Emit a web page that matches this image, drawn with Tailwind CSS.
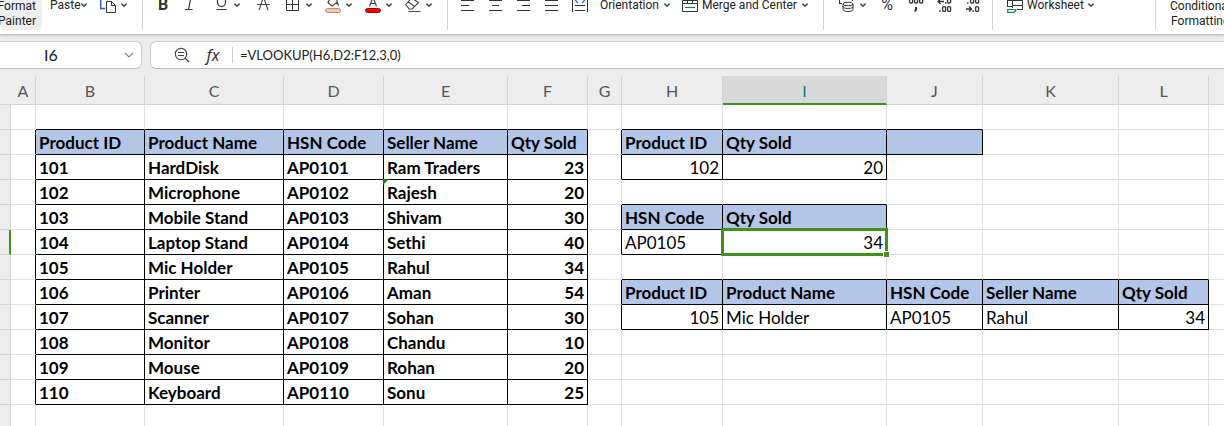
<!DOCTYPE html>
<html lang="en">
<head>
<meta charset="utf-8">
<meta name="viewport" content="width=device-width, initial-scale=1">
<title>Spreadsheet</title>
<script src="https://cdn.jsdelivr.net/npm/@tailwindcss/browser@4"></script>
</head>
<body class="bg-[#ededed] font-['Lato','Liberation_Sans',sans-serif] overflow-hidden h-screen flex flex-col">
<svg class="hidden" aria-hidden="true">
  <symbol id="chev" viewBox="0 0 6 6"><path d="M.3 1.6 3 4.2 5.7 1.6" fill="none" stroke="#444" stroke-width="1.5"/></symbol>
</svg>

<header class="flex shrink-0 h-[35px] overflow-hidden bg-white border-b border-[#c6c6c6] shadow-sm font-['Roboto',sans-serif] text-xs leading-4 text-[#222] whitespace-nowrap relative">
  <div class="flex items-start shrink-0 w-[143px] h-[30px] border-r border-[#d5d5d5]">
    <button class="w-[42px] h-[38px] -mt-2 pt-[7px] pr-1.5 bg-[#eee] rounded-md leading-[15px] flex flex-col items-end shrink-0"><span>Format</span><span>Painter</span></button>
    <button class="flex items-center justify-between w-[37px] ml-2 -mt-[3px] h-4 shrink-0"><span>Paste</span><svg class="size-1.5 shrink-0"><use href="#chev"/></svg></button>
    <button aria-label="Copy" class="flex items-center gap-[5px] ml-[13px] -mt-[3px] h-4 shrink-0"><svg class="size-4" viewBox="0 -3 16 16" fill="none"><path d="M.7-3V8.5H5" stroke="#2456d6" stroke-width="1.4"/><path d="M6.5 1.5h5l4 4v7h-9zM11.5 1.5v4h4" stroke="#333"/></svg><svg class="size-1.5"><use href="#chev"/></svg></button>
  </div>

  <div class="flex items-start shrink-0 w-[305px] h-[30px] border-r border-[#d5d5d5] pl-3">
    <div class="flex items-center gap-[13px] -mt-[3px] h-4">
      <button class="w-4 text-base leading-4 font-bold text-[#333]">B</button>
      <button aria-label="Italic" class="w-4"><svg class="size-4" viewBox="0 -3 16 16"><path d="M7-3 4.5 9.5M1 9.5h7.500" stroke="#333" stroke-width="1.200" fill="none"/></svg></button>
      <button aria-label="Underline" class="flex items-center gap-[5px]"><svg class="size-4" viewBox="0 -3 16 16"><path d="M4.500-3V2.500a4 4 0 0 0 8 0V-3M3.500 9.500h10" stroke="#333" stroke-width="1.200" fill="none"/></svg><svg class="size-1.5"><use href="#chev"/></svg></button>
      <button aria-label="Strikethrough" class="w-[19px] flex justify-center"><svg class="size-4" viewBox="0 -3 16 16"><path d="M2 4.500h13M8.500-3 4 10M8.500-3 13 10" stroke="#444" stroke-width="1.100" fill="none"/></svg></button>
      <button aria-label="Borders" class="flex items-center gap-[5px]"><svg class="size-4" viewBox="0 -3 16 16"><path d="M1.500-3V10.500h12V-3M7.500-3V10.500M1.500 4.500h12" stroke="#333" fill="none"/></svg><svg class="size-1.5"><use href="#chev"/></svg></button>
      <button aria-label="Fill colour" class="flex items-center gap-[5px]"><svg class="size-4" viewBox="0 -3 16 16"><path d="M6-3 3 2.500 7 6l5-3.500V-3M12 1.500l1.500 4" stroke="#444" stroke-width="1.200" fill="none"/><rect x=".5" y="8.500" width="15" height="4" rx="2" fill="#f5c6aa" stroke="#b9917b"/></svg><svg class="size-1.5"><use href="#chev"/></svg></button>
      <button aria-label="Font colour" class="flex items-center gap-[5px]"><svg class="size-4" viewBox="0 -3 16 16"><path d="M4.500 6.500 8-3l3.500 9.500M5.500 3.500h5" stroke="#444" stroke-width="1.200" fill="none"/><rect x=".5" y="8.500" width="15" height="4" rx="2" fill="#f00000" stroke="#b40000"/></svg><svg class="size-1.5"><use href="#chev"/></svg></button>
      <button aria-label="Clear" class="flex items-center gap-[5px]"><svg class="size-4" viewBox="0 -3 16 16"><path d="m.7 4.500 6-6.500 6.800 4.500-6.300 6.500H4zM3 1.800l6.500 4.700M3.500 11.500h12" stroke="#444" stroke-width="1.100" fill="none"/></svg><svg class="size-1.5"><use href="#chev"/></svg></button>
    </div>
  </div>

  <div class="flex items-start shrink-0 w-[376px] h-[30px] border-r border-[#d5d5d5] pl-3">
    <div class="flex items-center gap-3 -mt-[3px] h-4">
      <button aria-label="Align left"><svg class="size-4" viewBox="0 -3 16 16"><path d="M1 .5h13M1 5.500h8M1 10.500h13" stroke="#333"/></svg></button>
      <button aria-label="Align centre"><svg class="size-4" viewBox="0 -3 16 16"><path d="M1 .5h13M4 5.500h7M1 10.500h13" stroke="#333"/></svg></button>
      <button aria-label="Align right"><svg class="size-4" viewBox="0 -3 16 16"><path d="M1 .5h13M6 5.500h8M1 10.500h13" stroke="#333"/></svg></button>
      <button aria-label="Justify"><svg class="size-4" viewBox="0 -3 16 16"><path d="M1 .5h13M1 5.500h13M1 10.500h13" stroke="#333"/></svg></button>
      <button aria-label="Distribute"><svg class="size-4" viewBox="0 -3 16 16" fill="none"><path d="M.5-3V12M15.500-3V12M3 5.500h10M3 10.500h10" stroke="#333"/><path d="M6-2 3.500.5 6 3M10-2l2.500 2.500L10 3" stroke="#2f6bff" stroke-width="1.200"/></svg></button>
      <button class="flex items-center justify-between w-[70px]"><span>Orientation</span><svg class="size-1.5 shrink-0"><use href="#chev"/></svg></button>
      <button class="flex items-center w-[126px]"><svg class="size-4 mr-1 shrink-0" viewBox="0 -3 16 16" fill="none"><path d="M.5.500V11.500h15V.5M.5 3.500h15M5.500-3v6.500M10.500-3v6.500M.5.5h15" stroke="#333"/><path d="M3 7.500h10" stroke="#0b8a5f" stroke-width="1.200"/></svg><span class="flex-1 text-left">Merge and Center</span><svg class="size-1.5 shrink-0"><use href="#chev"/></svg></button>
    </div>
  </div>

  <div class="flex items-start shrink-0 w-[169px] h-[30px] border-r border-[#d5d5d5] pl-[15px]">
    <div class="flex items-center gap-[13px] -mt-[3px] h-4">
      <button aria-label="Currency" class="flex items-center gap-[5px]"><svg class="size-4" viewBox="0 -3 16 16" fill="none" stroke="#334"><path d="M.5-3V3.500H3M13.500-3V1M7.500-3V0" stroke-width="1.200"/><ellipse cx="9" cy="4" rx="5" ry="1.800"/><path d="M4 4v5.500c0 2.600 10 2.600 10 0V4M4 6.500c0 2.600 10 2.600 10 0"/></svg><svg class="size-1.5"><use href="#chev"/></svg></button>
      <button class="w-4 text-base leading-4 text-[#333]">%</button>
      <button aria-label="Thousands separator"><svg class="size-4" viewBox="0 -3 16 16" fill="none" stroke="#333" stroke-width="1.300"><path d="M1.600-3v5q0 1 1 1h1q1 0 1-1v-5M6.600-3v5q0 1 1 1h1q1 0 1-1v-5M11.600-3v5q0 1 1 1h1q1 0 1-1v-5"/><path d="M8 7v2.500L7 11.500" stroke-width="2"/></svg></button>
      <button aria-label="Decrease decimal"><svg class="size-4" viewBox="0 -3 16 16" fill="none" stroke="#333" stroke-width="1.300"><path d="M7 1.500H1M3.500-1 1 1.500 3.500 4M10.600-3v5q0 1 1 1h1q1 0 1-1v-5"/><rect x="5.600" y="6.600" width="3" height="4.800" rx="1.200"/><rect x="10.600" y="6.600" width="3" height="4.800" rx="1.200"/><path d="M8 3h1.500M2 11h1.500" stroke-width="1.600"/></svg></button>
      <button aria-label="Increase decimal"><svg class="size-4" viewBox="0 -3 16 16" fill="none" stroke="#333" stroke-width="1.300"><path d="M4.600-3v5q0 1 1 1h1q1 0 1-1v-5M9.600-3v5q0 1 1 1h1q1 0 1-1v-5M0 9h5.500M3 6.500 5.500 9 3 11.500"/><rect x="9.600" y="6.600" width="3" height="4.800" rx="1.200"/><path d="M1 3h1.500M6.500 11H8" stroke-width="1.600"/></svg></button>
    </div>
  </div>

  <div class="flex items-start shrink-0 w-[163px] h-[30px] border-r border-[#d5d5d5] pl-3.5">
    <button class="flex items-center w-[87px] -mt-[3px] h-4"><svg class="size-4 mr-1 shrink-0" viewBox="0 -3 16 16" fill="none"><path d="M.5-3v10M5.500-3v11M.5 0.500h15M15.500-3v12.500H10M.5 6.500h5M5.500 5.500h10" stroke="#333"/><path d="M.7 9.500h8v1.200L7 12.300H.7z" stroke="#0b8a5f" stroke-width="1.200"/></svg><span class="flex-1 text-left">Worksheet</span><svg class="size-1.5 shrink-0"><use href="#chev"/></svg></button>
  </div>

  <button class="flex flex-col items-center leading-[15px] -mt-px h-[30px] pl-3.5 shrink-0"><span>Conditional</span><span>Formatting</span></button>
</header>

<section class="flex shrink-0 gap-2 h-[41px] pt-1.5 pb-1.5">
  <div class="flex items-center w-[142px] h-[28px] bg-white border border-l-0 border-[#cdcdcd] border-b-[#bbb] rounded-r-md shrink-0">
    <input aria-label="Name box" value="I6" class="w-[102px] shrink-0 text-center text-base text-[#222] outline-none">
    <button aria-label="Choose name" class="ml-[22px]"><svg class="w-2.5 h-2" viewBox="0 0 10 8"><path d="m1 2 4 4 4-4" fill="none" stroke="#888" stroke-width="1.200"/></svg></button>
  </div>
  <div class="flex items-center flex-1 h-[28px] bg-white border border-r-0 border-[#cdcdcd] border-b-[#bbb] rounded-l-md pl-[23px]">
    <button aria-label="Zoom out"><svg class="size-4" viewBox="0 0 16 16" fill="none" stroke="#444" stroke-width="1.100"><circle cx="7" cy="7" r="5.700"/><path d="m11 11 4 4M4 5.500h6M4 8.500h6"/></svg></button>
    <button aria-label="Insert function" class="ml-3.5 w-[18px] text-base leading-6 italic font-['Noto_Sans',sans-serif] text-[#333]">fx</button>
    <span class="ml-2.5 w-px h-4 bg-[#ccc]"></span>
    <input aria-label="Formula" value="=VLOOKUP(H6,D2:F12,3,0)" class="ml-[7px] pt-0.5 flex-1 text-[13px] text-[#222] outline-none">
  </div>
</section>

<main class="flex-1 overflow-hidden">
<table class="w-full table-fixed border-separate border-spacing-0 text-[17px] leading-[22px] text-black">
  <colgroup><col class="w-[11px]"><col class="w-[25px]"><col class="w-[109px]"><col class="w-[139px]"><col class="w-[100px]"><col class="w-[124px]"><col class="w-[80px]"><col class="w-[34px]"><col class="w-[101px]"><col class="w-[164px]"><col class="w-[96px]"><col class="w-[136px]"><col class="w-[90px]"><col></colgroup>
  <thead><tr id="head"></tr></thead>
  <tbody id="grid"></tbody>
</table>
</main>

<script>
const cols = 'ABCDEFGHIJKL'.split('').concat('M');
const blocks = [
  {col: 1, row: 2, bold: true, rows: [
    ['Product ID','Product Name','HSN Code','Seller Name','Qty Sold'],
    ['101','HardDisk','AP0101','Ram Traders',23],
    ['102','Microphone','AP0102','Rajesh',20],
    ['103','Mobile Stand','AP0103','Shivam',30],
    ['104','Laptop Stand','AP0104','Sethi',40],
    ['105','Mic Holder','AP0105','Rahul',34],
    ['106','Printer','AP0106','Aman',54],
    ['107','Scanner','AP0107','Sohan',30],
    ['108','Monitor','AP0108','Chandu',10],
    ['109','Mouse','AP0109','Rohan',20],
    ['110','Keyboard','AP0110','Sonu',25]]},
  {col: 7, row: 2, rows: [['Product ID','Qty Sold',''],[102,20]]},
  {col: 7, row: 5, rows: [['HSN Code','Qty Sold'],['AP0105',34]]},
  {col: 7, row: 8, rows: [['Product ID','Product Name','HSN Code','Seller Name','Qty Sold'],[105,'Mic Holder','AP0105','Rahul',34]]}
];
const cells = {};
for (const b of blocks) b.rows.forEach((r, i) => r.forEach((v, j) => {
  cells[(b.row + i) + ',' + (b.col + j)] = {v, head: i === 0, bold: b.bold || i === 0};
}));
const at = (r, c) => cells[r + ',' + c];

let head = '<td class="h-[29px] border-b border-[#d4d4d4]"></td>';
cols.forEach((name, c) => {
  const selected = c === 8;
  head += '<th scope="col" class="h-[29px] p-0 pt-0.5 text-center align-middle font-normal text-base leading-5 ' +
    (c < 12 ? 'border-r ' : '') +
    (selected ? 'bg-[#d9d9d9] text-[#008078] border-r-[#d4d4d4] border-b-2 border-b-[#40911f]' : 'text-[#555] border-b border-[#d4d4d4]') + '">' +
    (c < 12 ? name : '') + '</th>';
});
document.getElementById('head').innerHTML = head;

let body = '';
for (let r = 1; r <= 13; r++) {
  body += '<tr><td class="h-[25px] p-0 bg-[#ededed] border-b border-b-[#d4d4d4] ' +
    (r === 6 ? 'border-r-2 border-r-[#40911f]' : 'border-r border-r-[#d4d4d4]') + '"></td>';
  cols.forEach((_, c) => {
    const d = at(r, c);
    let cls = 'h-[25px] p-0 pt-0.5 pl-[3px] pr-[3px] whitespace-nowrap border-b ';
    if (c < 12) cls += 'border-r ';
    cls += d || at(r, c + 1) ? 'border-r-black ' : 'border-r-[#e1e1e1] ';
    cls += d || at(r + 1, c) ? 'border-b-black ' : 'border-b-[#e1e1e1] ';
    cls += d && d.head ? 'bg-[#b4c6e7] ' : 'bg-white ';
    if (d && d.bold) cls += 'font-bold ';
    if (d && typeof d.v === 'number') cls += 'text-right ';
    let extra = '';
    if (r === 6 && c === 8) {
      cls += 'relative ';
      extra = '<span class="absolute -inset-[2px] border-[3px] border-[#40911f]"></span><span class="absolute -right-[4px] -bottom-[4px] size-[7px] bg-[#40911f] border border-white"></span>';
    }
    if (r === 3 && c === 4) {
      cls += 'relative ';
    }
    if (r === 4 && c === 4) {
      cls += 'relative ';
      extra = '<svg class="absolute -left-px -top-px size-[6px]" viewBox="0 0 6 6"><path d="M0 0h6L0 6z" fill="#0b800b"/></svg>';
    }
    body += '<td class="' + cls + '">' + (d ? d.v : '') + extra + '</td>';
  });
  body += '</tr>';
}
document.getElementById('grid').innerHTML = body;
</script>
</body>
</html>
